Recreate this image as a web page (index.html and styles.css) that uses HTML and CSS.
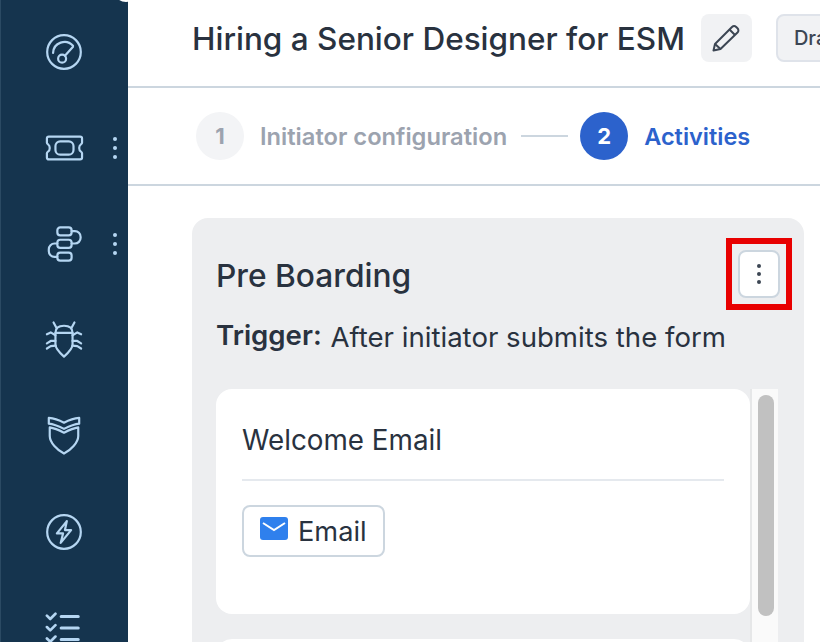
FILE: index.html
```html
<!DOCTYPE html>
<html lang="en">
<head>
    <meta charset="UTF-8">
    <meta name="viewport" content="width=device-width, initial-scale=1.0">
    <title>Hiring a Senior Designer for ESM</title>
    <link rel="stylesheet" href="styles.css">
</head>
<body>
    <div class="app">
        <!-- Sidebar -->
        <aside class="sidebar">
            <div class="side-item">
                <svg class="side-icon" viewBox="0 0 40 40"><circle cx="20" cy="20" r="17.7"/><path d="M8.500 21a12 12 0 0 1 21-7.500"/><circle cx="18" cy="27" r="4.200"/><path d="M21 24l8.500-9.500"/></svg>
            </div>
            <div class="side-item">
                <svg class="side-icon" viewBox="0 0 40 40"><path d="M4 8h33c1.300 0 2 .8 2 2v4.500c0 .8-.6 1.200-1.200 1.600-2.400 1.600-2.400 6.200 0 7.800.6.4 1.200.8 1.200 1.600V30c0 1.200-.7 2-2 2H4c-1.300 0-2-.8-2-2v-4.500c0-.8.6-1.200 1.200-1.600 2.400-1.600 2.400-6.200 0-7.800C2.600 15.700 2 15.300 2 14.500V10c0-1.200.7-2 2-2z"/><rect x="11" y="13" width="19" height="14" rx="5"/></svg>
                <svg class="side-dots" viewBox="0 0 6 24"><circle cx="3" cy="3" r="2"/><circle cx="3" cy="12" r="2"/><circle cx="3" cy="21" r="2"/></svg>
            </div>
            <div class="side-item">
                <svg class="side-icon" viewBox="0 0 40 40"><rect x="13" y="2.500" width="15" height="8.500" rx="3"/><rect x="13" y="15.500" width="15" height="8.500" rx="3"/><rect x="13" y="29" width="15" height="8.500" rx="3"/><path d="M28 6.500h3.500a6 6 0 0 1 6 6v1a6 6 0 0 1-6 6H28"/><path d="M13 19.500h-3a6 6 0 0 0-6 6v2a6 6 0 0 0 6 6h3"/></svg>
                <svg class="side-dots" viewBox="0 0 6 24"><circle cx="3" cy="3" r="2"/><circle cx="3" cy="12" r="2"/><circle cx="3" cy="21" r="2"/></svg>
            </div>
            <div class="side-item">
                <svg class="side-icon" viewBox="0 0 40 40"><path d="M11 12.500c0-5 3.500-7.500 9-7.500s9 2.500 9 7.500v12c0 4.500-5 9.500-9 13-4-3.500-9-8.500-9-13z"/><path d="M11 12.500h18M12 7L9 1.500M28 7l3-5.500"/><path d="M11 15l-5-3-4 2M11 21H6l-4 2.500M11 26l-5 .5-4 2.500M29 15l5-3 4 2M29 21h5l4 2.500M29 26l5 .5 4 2.500"/></svg>
            </div>
            <div class="side-item">
                <svg class="side-icon" viewBox="0 0 40 40"><path d="M4 1c5 .5 11 2.500 16 5 5-2.500 11-4.500 16-5v6c-5 .5-11 3-16 5.500C15 10 9 7.500 4 7z"/><path d="M5 11c5 .8 10 3 15 5.500 5-2.500 10-4.700 15-5.500v9c0 7-8 15-15 18.500C13 35 5 27 5 20z"/></svg>
            </div>
            <div class="side-item">
                <svg class="side-icon" viewBox="0 0 40 40"><circle cx="20" cy="20" r="17.700"/><path d="M23 8.500L12.500 21.500h6.500L16.500 31.500 27.500 18h-6.500z"/></svg>
            </div>
            <div class="side-item">
                <svg class="side-icon" viewBox="0 0 40 40"><path class="check" d="M2 7l3.500 3.500L11 5M2 19l3.500 3.500L11 17M2 31l3.500 3.500L11 29"/><path class="bar" d="M17 8h18M17 20h18M17 32h18"/></svg>
            </div>
        </aside>

        <main class="main">
            <header class="page-head">
                <h1 class="page-title">Hiring a Senior Designer for ESM</h1>
                <button class="edit-btn" type="button">
                    <svg viewBox="0 0 28 28"><path d="M1.500 26.500L3 20 20 3c1.200-1.200 3-1.200 4.200 0l1.300 1.300c1.200 1.200 1.200 3 0 4.200L8.500 25z"/><path d="M17.500 5.500l5.500 5.500M3 20l5.500 5"/></svg>
                </button>
                <span class="status-tag">Draft</span>
            </header>

            <div class="stepper">
                <span class="step-num">1</span>
                <span class="step-label">Initiator configuration</span>
                <span class="step-line"></span>
                <span class="step-num active">2</span>
                <span class="step-label active">Activities</span>
            </div>

            <section class="stage">
                <div class="stage-head">
                    <h2 class="stage-title">Pre Boarding</h2>
                    <span class="more-mark">
                        <button class="more-btn" type="button">
                            <svg viewBox="0 0 6 24"><circle cx="3" cy="4" r="2"/><circle cx="3" cy="12" r="2"/><circle cx="3" cy="20" r="2"/></svg>
                        </button>
                    </span>
                </div>
                <p class="trigger"><strong>Trigger:</strong> After initiator submits the form</p>

                <div class="activity-list">
                    <div class="cards">
                        <div class="card">
                            <h3 class="card-title">Welcome Email</h3>
                            <span class="chip">
                                <svg viewBox="0 0 28 23"><rect width="28" height="23" rx="3"/><path d="M3 6l11 7 11-7"/></svg>
                                Email
                            </span>
                        </div>
                        <div class="card"></div>
                    </div>
                    <div class="scroll-track"><div class="scroll-thumb"></div></div>
                </div>
            </section>
        </main>
    </div>
</body>
</html>
```

FILE: styles.css
```css
html, body {
    margin: 0;
    height: 642px;
    overflow: hidden;
}
body {
    font-family: Inter, "Liberation Sans", sans-serif;
    color: #29323f;
    background-color: #fff;
}
h1, h2, h3, p {
    margin: 0;
}
button {
    padding: 0;
    font: inherit;
}
.app {
    display: flex;
    height: 642px;
}

/* Sidebar */
.sidebar {
    position: relative;
    width: 127px;
    flex-shrink: 0;
    border-left: 1px solid #2b4a63;
    background-color: #15344e;
    display: flex;
    flex-direction: column;
    align-items: stretch;
    padding-top: 33px;
    gap: 58px;
    overflow: hidden;
}
/* sliver of the round thing that sits over the top corner */
.sidebar::before {
    content: "";
    position: absolute;
    top: -13px;
    right: -8px;
    width: 20px;
    height: 15px;
    border-radius: 50%;
    background-color: #fff;
}
.side-item {
    height: 38px;
    flex-shrink: 0;
    display: flex;
    align-items: center;
    padding-left: 44px;
    gap: 29px;
}
.side-icon {
    width: 38px;
    height: 38px;
    fill: none;
    stroke: #b5d6f2;
    stroke-width: 2.300;
    stroke-linecap: round;
    stroke-linejoin: round;
    overflow: visible;
}
.side-icon .check {
    stroke-width: 2.800;
}
.side-icon .bar {
    stroke-width: 3.200;
}
.side-dots {
    width: 6px;
    height: 24px;
    fill: #b5d6f2;
}

/* Main column */
.main {
    flex: 1;
    min-width: 0;
    overflow: hidden;
}
.page-head {
    height: 76px;
    box-sizing: content-box;
    border-bottom: 2px solid #ccd6df;
    padding: 0 0 10px 64px;
    display: flex;
    align-items: center;
    white-space: nowrap;
}
.page-title {
    font-size: 31.500px;
    font-weight: 500;
}
.edit-btn {
    width: 51px;
    height: 48px;
    flex-shrink: 0;
    margin-left: 16px;
    border: none;
    border-radius: 8px;
    background-color: #f1f2f4;
    display: flex;
    align-items: center;
    justify-content: center;
}
.edit-btn svg {
    width: 28px;
    height: 28px;
    fill: none;
    stroke: #3c4653;
    stroke-width: 2;
    stroke-linejoin: round;
}
.status-tag {
    margin-left: 24px;
    padding: 0 16px;
    height: 44px;
    line-height: 44px;
    border: 2px solid #dfe3ea;
    border-radius: 8px;
    background-color: #f1f2f4;
    font-size: 20px;
    font-weight: 500;
    color: #3c4653;
}

/* Stepper */
.stepper {
    height: 96px;
    border-bottom: 2px solid #ccd6df;
    padding-left: 68px;
    display: flex;
    align-items: center;
    gap: 16px;
}
.step-num {
    width: 48px;
    height: 48px;
    border-radius: 50%;
    background-color: #f3f4f6;
    color: #9ca3af;
    font-size: 22px;
    font-weight: 700;
    display: flex;
    align-items: center;
    justify-content: center;
}
.step-num.active {
    background-color: #2c62cc;
    color: #fff;
}
.step-label {
    font-size: 23.700px;
    font-weight: 600;
    color: #9ca3af;
}
.step-label.active {
    font-size: 23.500px;
    color: #2c62cc;
}
.step-line {
    width: 47px;
    height: 2px;
    margin-left: -2px;
    margin-right: -4px;
    background-color: #ccd6df;
}

/* Stage panel */
.stage {
    margin: 32px 16px 0 64px;
    height: 500px;
    padding: 24px 26px 0 24px;
    box-sizing: border-box;
    border-radius: 16px 16px 0 0;
    background-color: #edeef0;
}
.stage-head {
    display: flex;
    align-items: center;
    justify-content: space-between;
    height: 66px;
}
.stage-title {
    font-size: 31.700px;
    font-weight: 500;
}
.more-mark {
    margin: -2px -14px 0 0;
    border: 6px solid #e80000;
    width: 66px;
    height: 72px;
    box-sizing: border-box;
    display: flex;
    align-items: center;
    justify-content: center;
}
.more-btn {
    width: 42px;
    height: 48px;
    border: 2px solid #ccd6df;
    border-radius: 8px;
    background-color: #fff;
    display: flex;
    align-items: center;
    justify-content: center;
}
.more-btn svg {
    width: 6px;
    height: 24px;
    fill: #3c4653;
}
.trigger {
    margin-top: 9px;
    height: 36px;
    font-size: 27.600px;
    line-height: 36px;
}
.trigger strong {
    font-weight: 600;
    vertical-align: 2px;
    margin-right: 1px;
}
.activity-list {
    margin-top: 36px;
    display: flex;
    height: 253px;
    overflow: hidden;
}
.cards {
    width: 534px;
    flex-shrink: 0;
    display: flex;
    flex-direction: column;
    gap: 25px;
}
.card {
    height: 225px;
    flex-shrink: 0;
    box-sizing: border-box;
    padding: 33px 26px 0;
    border-radius: 16px;
    background-color: #fff;
}
.card-title {
    font-size: 27.800px;
    font-weight: 400;
    line-height: 36px;
    padding-bottom: 21px;
    border-bottom: 2px solid #e5e9ee;
}
.chip {
    margin-top: 24px;
    height: 52px;
    width: 143px;
    box-sizing: border-box;
    border: 2px solid #ccd6df;
    border-radius: 8px;
    display: flex;
    align-items: center;
    gap: 10px;
    padding-left: 16px;
    font-size: 27.200px;
}
.chip svg {
    width: 28px;
    height: 23px;
    margin-top: -6px;
}
.chip svg rect {
    fill: #2f80ed;
}
.chip svg path {
    fill: none;
    stroke: #fff;
    stroke-width: 2;
}
.scroll-track {
    width: 28px;
    padding: 6px 4px 0 6px;
    box-sizing: border-box;
    border-left: 2px solid #e6e7e8;
    background-color: #fafafa;
}
.scroll-thumb {
    height: 221px;
    border-radius: 8px;
    background-color: #c1c1c1;
}
```
